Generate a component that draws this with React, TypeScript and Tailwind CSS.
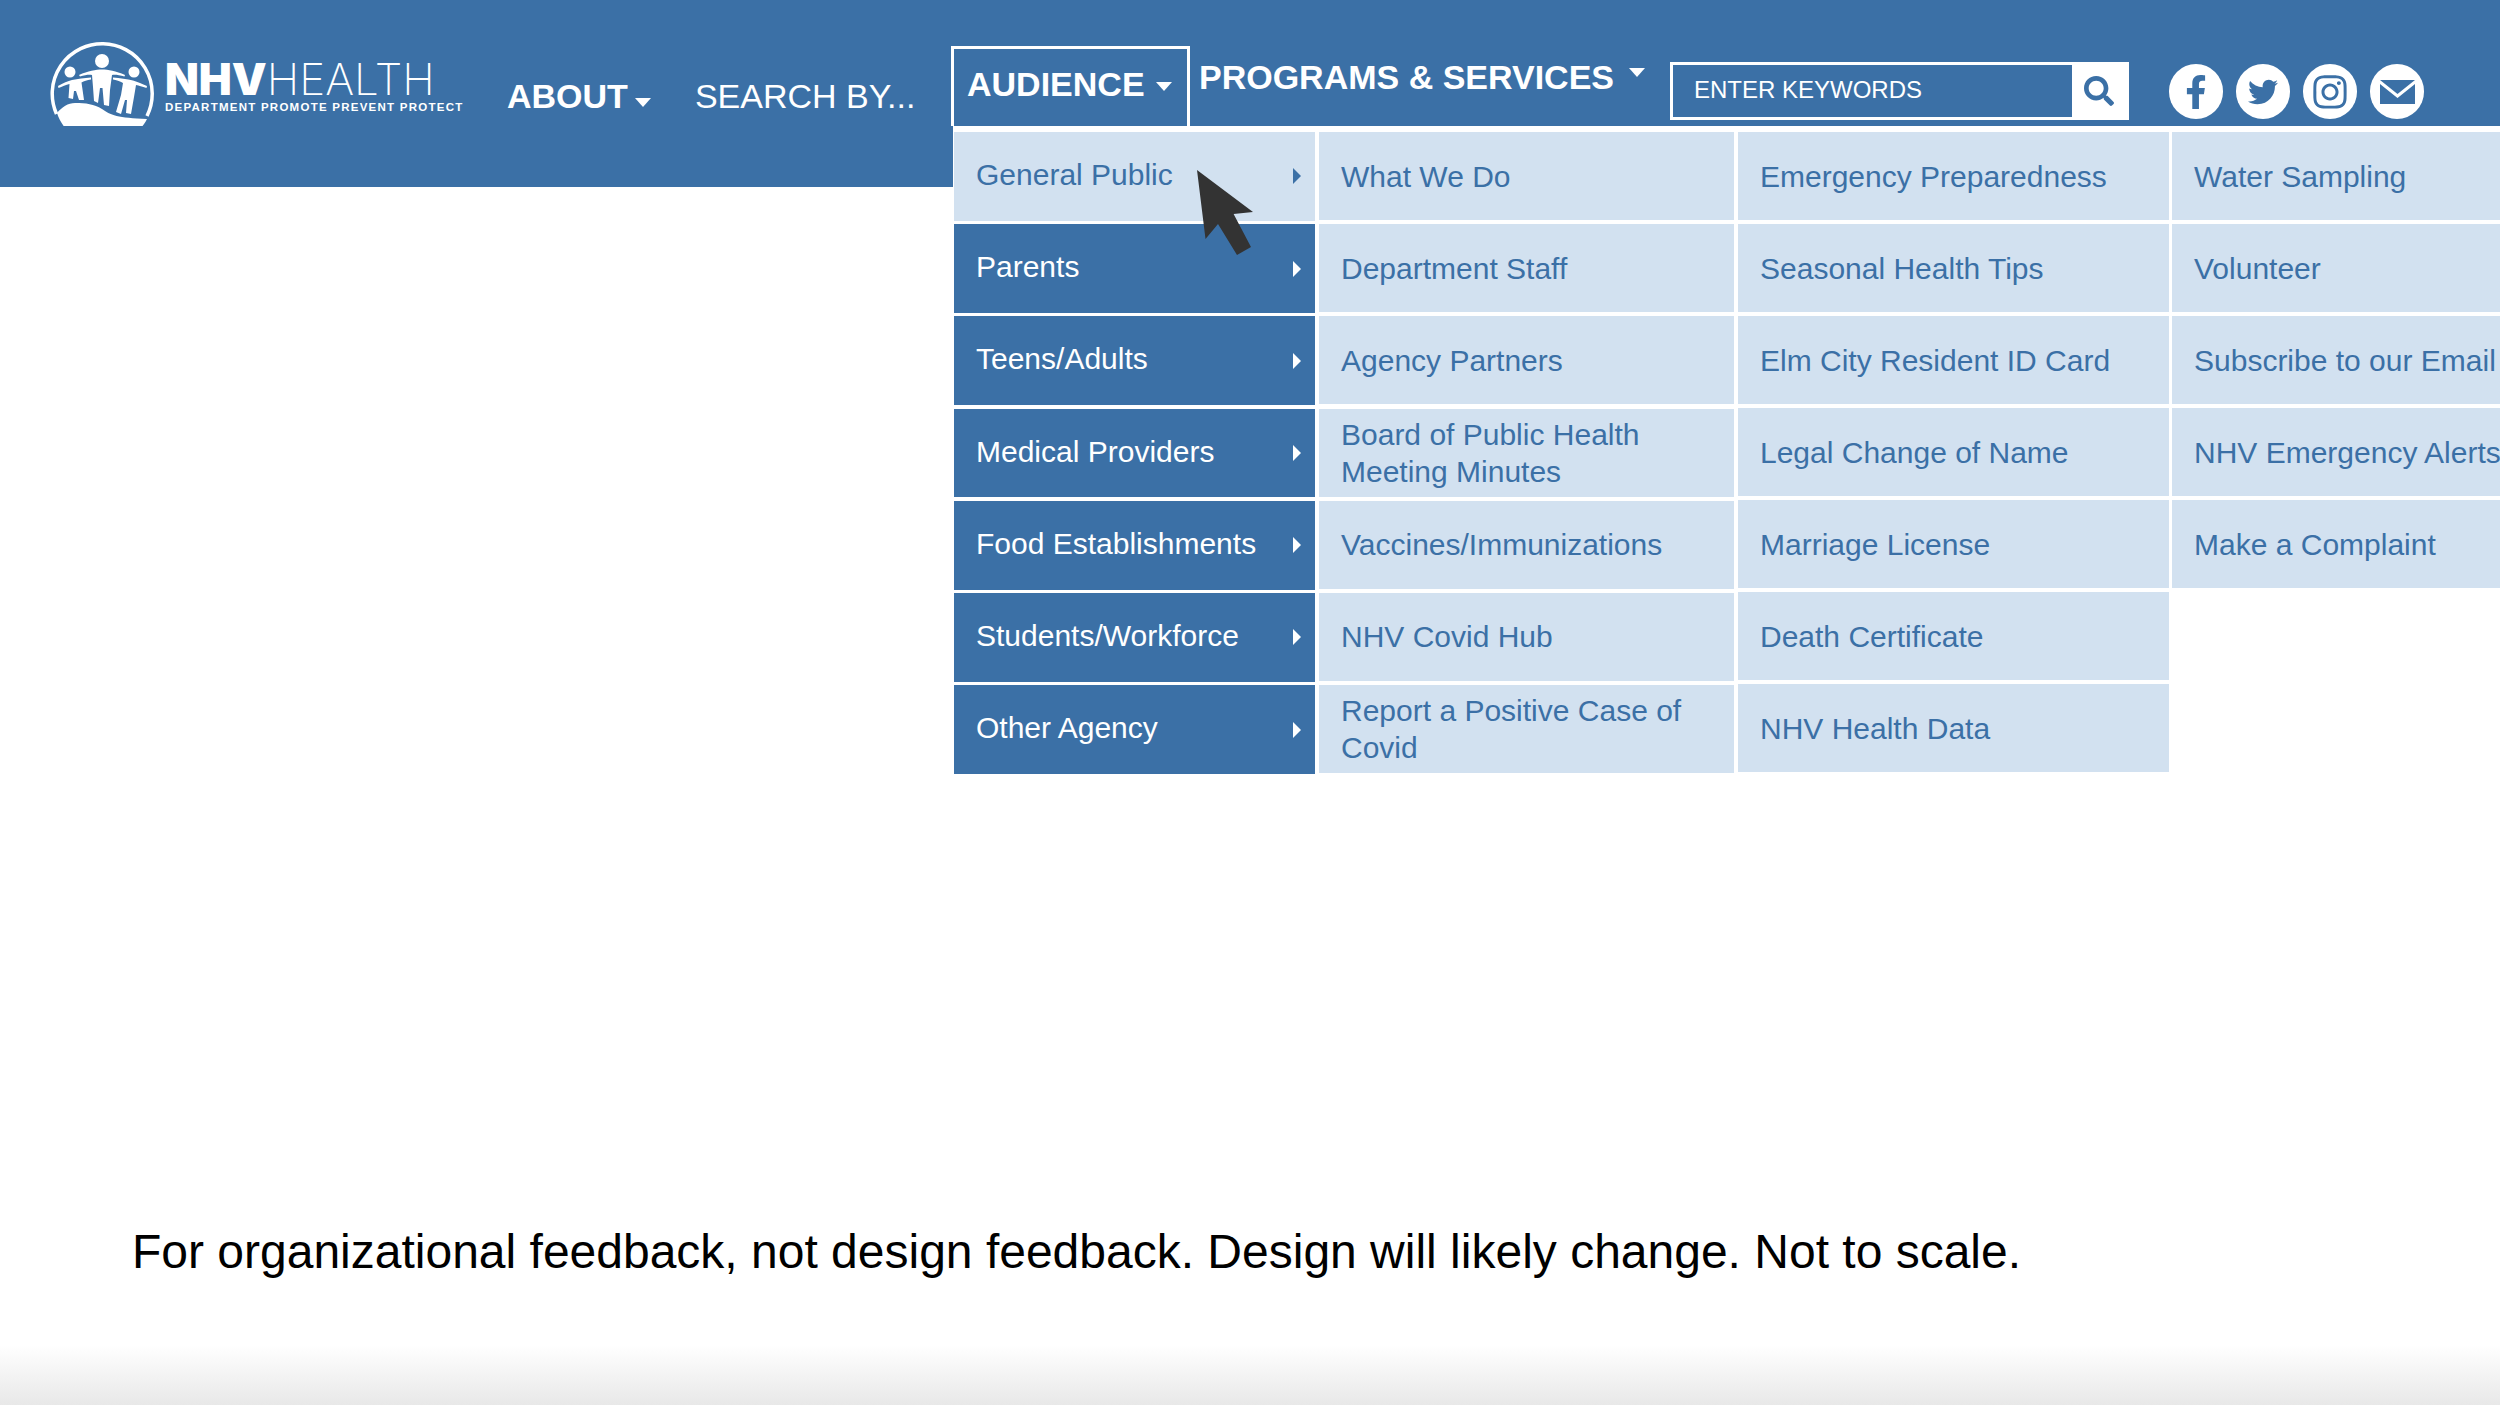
import { FaFacebookF, FaTwitter, FaInstagram, FaSearch } from "react-icons/fa";

const blue = "bg-[#3b70a6]";

const audience = [
  "General Public",
  "Parents",
  "Teens/Adults",
  "Medical Providers",
  "Food Establishments",
  "Students/Workforce",
  "Other Agency",
];

const col2 = [
  "What We Do",
  "Department Staff",
  "Agency Partners",
  "Board of Public Health Meeting Minutes",
  "Vaccines/Immunizations",
  "NHV Covid Hub",
  "Report a Positive Case of Covid",
];

const col3 = [
  "Emergency Preparedness",
  "Seasonal Health Tips",
  "Elm City Resident ID Card",
  "Legal Change of Name",
  "Marriage License",
  "Death Certificate",
  "NHV Health Data",
];

const col4 = [
  "Water Sampling",
  "Volunteer",
  "Subscribe to our Email",
  "NHV Emergency Alerts",
  "Make a Complaint",
];

function Logo() {
  return (
    <svg viewBox="0 0 104 104" className="w-[104px] h-[104px] shrink-0" fill="#fff">
      <path d="M6.5 74 A50 50 0 1 1 97 76" fill="none" stroke="#fff" strokeWidth="3.5" />
      <circle cx="52" cy="21" r="7" />
      <circle cx="20" cy="32" r="5.5" />
      <circle cx="84" cy="32" r="5.5" />
      <path d="M29 35 C38 31 46 29.5 52 29.5 C58 29.5 66 31 75 35 L74.5 36.5 C69 35 65 34.5 62 35 L60 50 L59 66 L54 65 L52.5 48 L50 48 L48 63 L44 61 L43 47 L42 35 C39 34.5 35 35 30 36.5Z" />
      <path d="M8 46 C13 43 18 41 22 40 C28 39 34 38 41 37.5 L41 39.5 C37 40 34 41 31.5 42.5 L34 60 L29 60 L26 51 L24 51 L23 59 L18.5 58 L19.5 44 C16 45 12 46.5 8.5 48Z" />
      <path d="M63 37.5 C70 38 77 39 83 40.5 C88 42 92 44 97 46 L96.5 48 C92 46.5 89 45.5 86 45 L84 57 L81 74 L76 73 L77 60 L75 60 L71 74 L66 72 L71 55 L73 43 C70 41 66 40 63 39.5Z" />
      <path d="M7 73 C12 67 18 63 25 63 C36 63 44 64 52 69 C60 75 68 78 97 79 C90 94 72 103 52 103 C30 103 13 92 7 73Z" />
    </svg>
  );
}

function Caret({ className }: { className: string }) {
  return <span className={"w-0 h-0 border-x-[8px] border-x-transparent border-t-[9px] border-t-white " + className} />;
}

function Social({ children }: { children: React.ReactNode }) {
  return <span className="w-[54px] h-[55px] rounded-full bg-white flex items-center justify-center text-[#3b70a6]">{children}</span>;
}

export default function App() {
  return (
    <div className="relative h-[1405px] w-[2500px] overflow-hidden bg-white flex flex-col font-['Liberation_Sans',Arial,sans-serif]">
      <header className={`${blue} h-[126px] shrink-0 text-white text-[34px] flex`}>
        <div className="w-[953px] shrink-0 flex pl-[50px] pt-[40px]">
          <Logo />
          <div className="ml-[11px] mt-[20px] w-[281px]">
            <div className="flex font-['Inter',sans-serif] text-[44px] leading-[38px] h-[38px]">
              <span className="font-black">NHV</span>
              <span className="font-extralight">HEALTH</span>
            </div>
            <div className="mt-[3px] text-[11.5px] leading-[12px] font-bold tracking-[1.25px] whitespace-nowrap">DEPARTMENT PROMOTE PREVENT PROTECT</div>
          </div>
          <div className="ml-[61px] mt-[28px] flex items-start leading-[56px] h-[56px] font-bold">
            ABOUT
            <Caret className="ml-[7px] mt-[30px]" />
          </div>
          <div className="ml-[44px] mt-[28px] leading-[56px] h-[56px] whitespace-nowrap">SEARCH BY...</div>
        </div>
        <div className="h-[80px] mt-[46px] -ml-[2px] w-[239px] shrink-0 border-[3px] border-b-0 border-white px-[13px] pt-[9px] flex items-start font-bold">
          <span className="leading-[52px]">AUDIENCE</span>
          <Caret className="ml-[11px] mt-[24px]" />
        </div>
        <div className="ml-[9px] mt-[31px] h-[52px] flex items-start font-bold">
          <span className="leading-[52px] mt-[20px] whitespace-nowrap">PROGRAMS &amp; SERVICES</span>
          <Caret className="ml-[15px] mt-[37px]" />
        </div>
        <div className="ml-[25px] mt-[62px] w-[459px] h-[58px] border-[3px] border-white flex text-[24px]">
          <span className="flex-1 pl-[21px] leading-[50px]">ENTER KEYWORDS</span>
          <span className="w-[54px] bg-white flex items-center justify-center text-[#3b70a6] text-[30px]">
            <FaSearch />
          </span>
        </div>
        <div className="ml-[40px] mt-[64px] flex gap-[13px] h-[55px]">
          <Social><FaFacebookF className="text-[34px]" /></Social>
          <Social><FaTwitter className="text-[30px]" /></Social>
          <Social><FaInstagram className="text-[38px]" /></Social>
          <Social>
            <svg viewBox="0 0 35 24" className="w-[35px] h-[24px]">
              <path d="M0 0H35L17.5 14Z" fill="#3b70a6" />
              <path d="M0 4L17.5 18L35 4V24H0Z" fill="#3b70a6" />
            </svg>
          </Social>
        </div>
      </header>
      <div className={`${blue} w-[953px] h-[61px] shrink-0`} />

      {/* dropdown sits over the page */}
      <div className="absolute left-[953px] top-[126px] w-[1547px] h-[648px] pt-[3px] border-t-[3px] border-white flex text-[30px] leading-[37px] text-[#3b70a6]">
        <div className="w-[361px] ml-[1px] flex flex-col gap-[3.5px] shrink-0">
          {audience.map((label, i) => (
            <div key={label} className={`h-[89px] pl-[22px] pr-[14px] flex items-center justify-between whitespace-nowrap ${i === 0 ? "bg-[#d2e1f0]" : "bg-[#3b70a6] text-white"}`}>
              <span className="-mt-[4px]">{label}</span>
              <span className={`w-0 h-0 border-y-[8px] border-y-transparent border-l-[8px] ${i === 0 ? "border-l-[#3b70a6]" : "border-l-white"}`} />
            </div>
          ))}
        </div>
        <div className="ml-[4px] w-[415px] flex flex-col gap-[4.2px] shrink-0">
          {col2.map((label) => (
            <div key={label} className="h-[88px] bg-[#d2e1f0] px-[22px] flex items-center">{label}</div>
          ))}
        </div>
        <div className="ml-[4px] w-[431px] flex flex-col gap-[4px] shrink-0">
          {col3.map((label) => (
            <div key={label} className="h-[88px] bg-[#d2e1f0] pl-[22px] flex items-center">{label}</div>
          ))}
        </div>
        <div className="ml-[3px] flex-1 flex flex-col gap-[4px] min-w-0">
          {col4.map((label) => (
            <div key={label} className="h-[88px] bg-[#d2e1f0] pl-[22px] flex items-center whitespace-nowrap overflow-hidden">{label}</div>
          ))}
        </div>
      </div>

      {/* mouse pointer */}
      <svg viewBox="0 0 56 85" className="absolute left-[1197px] top-[170px] w-[56px] h-[85px]">
        <path d="M0 0L56 42L36.6 44L54 77L40 85L21 54L8.5 69Z" fill="#333" />
      </svg>

      <p className="mt-[1022px] ml-[132px] text-[48px] leading-[60px] text-black whitespace-nowrap absolute top-[200px]">
        For organizational feedback, not design feedback. Design will likely change. Not to scale.
      </p>
      <div className="mt-auto h-[60px] bg-gradient-to-b from-white to-[#e8e8e8]" />
    </div>
  );
}
